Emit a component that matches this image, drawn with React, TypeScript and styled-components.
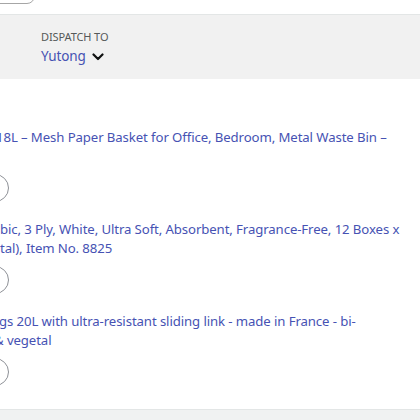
import styled, { createGlobalStyle } from "styled-components";

const GlobalStyle = createGlobalStyle`
  html, body {
    margin: 0;
    padding: 0;
    background: #fff;
    overflow: hidden;
  }
  body {
    font-family: "Noto Sans", "Open Sans", sans-serif;
    color: #0f1111;
  }
`;

const Page = styled.div`
  width: 420px;
  height: 420px;
  overflow: hidden;
  display: flex;
  flex-direction: column;
`;

const TopBar = styled.div`
  height: 14px;
  border-bottom: 1px solid #e3e6e6;
  overflow: hidden;
`;

const GhostButton = styled.div`
  width: 44px;
  height: 24px;
  margin-top: -22px;
  margin-left: -11px;
  border: 1px solid #a6a6a6;
  border-radius: 8px;
  background: #fff;
`;

const DispatchBand = styled.div`
  height: 64px;
  flex-shrink: 0;
  background: #f1f1f1;
  padding: 14px 0 0 41px;
  box-sizing: border-box;
  display: flex;
  flex-direction: column;
  gap: 2px;
`;

const DispatchLabel = styled.div`
  font-size: 11px;
  line-height: 16px;
  color: #565959;
  letter-spacing: -0.1px;
`;

const AddressRow = styled.div`
  display: flex;
  align-items: center;
  gap: 6px;
  font-size: 13.5px;
  line-height: 19px;
  color: #4652b3;
  letter-spacing: -0.1px;
`;

const List = styled.div`
  display: flex;
  flex-direction: column;
  gap: 18px;
  padding-top: 49px;
  flex: 1;
`;

const Item = styled.div`
  display: flex;
  flex-direction: column;
  gap: 8px;
`;

const Title = styled.div`
  height: 38px;
  font-size: 13.2px;
  line-height: 19px;
  letter-spacing: -0.1px;
  color: #4652b3;
  white-space: nowrap;
`;

const Line = styled.div<{ $shift?: number }>`
  height: 19px;
  margin-left: ${(p) => p.$shift ?? 0}px;
`;

const QtyCircle = styled.div`
  width: 26px;
  height: 26px;
  margin-left: -19px;
  border: 1px solid #8d9096;
  border-radius: 50%;
  background: #fff;
`;

const BottomBand = styled.div`
  height: 10px;
  flex-shrink: 0;
  background: #f0f2f2;
  border-top: 1px solid #e3e6e6;
`;

const Chevron = () => (
  <svg width="12" height="8" viewBox="0 0 12 8" fill="none">
    <path
      d="M1.5 1.5 L6 6 L10.5 1.5"
      stroke="#0f1111"
      strokeWidth="2.2"
      strokeLinecap="round"
      strokeLinejoin="round"
    />
  </svg>
);

const items = [
  {
    lines: [
      { text: "18L – Mesh Paper Basket for Office, Bedroom, Metal Waste Bin –", shift: -4 },
      { text: "", shift: 0 },
    ],
  },
  {
    lines: [
      { text: "bic, 3 Ply, White, Ultra Soft, Absorbent, Fragrance-Free, 12 Boxes x", shift: 0 },
      { text: "tal), Item No. 8825", shift: 0 },
    ],
  },
  {
    lines: [
      { text: "gs 20L with ultra-resistant sliding link - made in France - bi-", shift: -1 },
      { text: "& vegetal", shift: -6 },
    ],
  },
];

export default function App() {
  return (
    <Page>
      <GlobalStyle />
      <TopBar>
        <GhostButton />
      </TopBar>
      <DispatchBand>
        <DispatchLabel>DISPATCH TO</DispatchLabel>
        <AddressRow>
          Yutong <Chevron />
        </AddressRow>
      </DispatchBand>
      <List>
        {items.map((item, i) => (
          <Item key={i}>
            <Title>
              {item.lines.map((l, j) => (
                <Line key={j} $shift={l.shift}>
                  {l.text}
                </Line>
              ))}
            </Title>
            <QtyCircle />
          </Item>
        ))}
      </List>
      <BottomBand />
    </Page>
  );
}
